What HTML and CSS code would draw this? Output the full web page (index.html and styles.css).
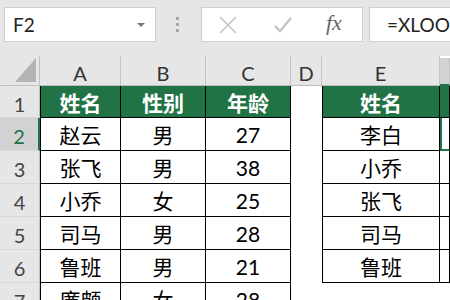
FILE: index.html
```html
<!DOCTYPE html>
<html lang="zh-CN">
<head>
    <meta charset="UTF-8">
    <title>XLOOKUP</title>
    <link rel="stylesheet" href="styles.css">
</head>
<body>
    <div class="toolbar">
        <div class="namebox"><span>F2</span><span class="arrow"></span></div>
        <div class="grip"><i></i><i></i><i></i></div>
        <div class="fxbtns">
            <svg class="ico" width="20" height="20" viewBox="0 0 20 20"><path d="M2 2 L18 18 M18 2 L2 18" stroke="#c4c4c4" stroke-width="1.6" fill="none"/></svg>
            <svg class="ico ok" width="20" height="20" viewBox="0 0 20 20"><path d="M2 11 L7 16 L18 3" stroke="#c4c4c4" stroke-width="2.4" fill="none"/></svg>
            <span class="fx">fx</span>
        </div>
        <div class="formula">=XLOOKUP(E2,A2:A7,B2:B7)</div>
    </div>

    <div class="sheet">
        <div class="corner"><span></span></div>
        <div class="colhead">A</div>
        <div class="colhead">B</div>
        <div class="colhead">C</div>
        <div class="colhead">D</div>
        <div class="colhead">E</div>
        <div class="colhead sel"></div>

        <div class="rowhead">1</div>
        <div class="c l head">姓名</div>
        <div class="c head">性别</div>
        <div class="c head">年龄</div>
        <div class="blank"></div>
        <div class="c l head">姓名</div>
        <div class="c head"></div>

        <div class="rowhead sel">2</div>
        <div class="c l">赵云</div>
        <div class="c">男</div>
        <div class="c">27</div>
        <div class="blank"></div>
        <div class="c l">李白</div>
        <div class="c active"></div>

        <div class="rowhead">3</div>
        <div class="c l">张飞</div>
        <div class="c">男</div>
        <div class="c">38</div>
        <div class="blank"></div>
        <div class="c l">小乔</div>
        <div class="c"></div>

        <div class="rowhead">4</div>
        <div class="c l">小乔</div>
        <div class="c">女</div>
        <div class="c">25</div>
        <div class="blank"></div>
        <div class="c l">张飞</div>
        <div class="c"></div>

        <div class="rowhead">5</div>
        <div class="c l">司马</div>
        <div class="c">男</div>
        <div class="c">28</div>
        <div class="blank"></div>
        <div class="c l">司马</div>
        <div class="c"></div>

        <div class="rowhead">6</div>
        <div class="c l">鲁班</div>
        <div class="c">男</div>
        <div class="c">21</div>
        <div class="blank"></div>
        <div class="c l">鲁班</div>
        <div class="c"></div>

        <div class="rowhead">7</div>
        <div class="c l">廉颇</div>
        <div class="c">女</div>
        <div class="c">28</div>
        <div class="blank"></div>
        <div class="blank"></div>
        <div class="blank"></div>
    </div>
</body>
</html>
```

FILE: styles.css
```css
body {
    margin: 0;
    width: 450px;
    height: 300px;
    overflow: hidden;
    background: #e6e6e6;
    font-family: Lato, "Noto Sans CJK SC", sans-serif;
    color: #000;
}
.toolbar {
    display: flex;
    align-items: flex-start;
    height: 56px;
    padding: 7px 0 0 4px;
    box-sizing: border-box;
}
.namebox {
    width: 152px;
    height: 35px;
    box-sizing: border-box;
    background: #fff;
    border: 1px solid #cfcfcf;
    display: flex;
    align-items: center;
    justify-content: space-between;
    padding: 0 10px 0 8px;
    font-size: 19px;
    color: #222;
}
.arrow {
    width: 0;
    height: 0;
    border-left: 4px solid transparent;
    border-right: 4px solid transparent;
    border-top: 4px solid #777;
}
.grip {
    margin: 0 22px 0 20px;
    height: 35px;
    display: flex;
    flex-direction: column;
    justify-content: center;
    gap: 3px;
}
.grip i {
    width: 3px;
    height: 3px;
    background: #a8a8a8;
}
.fxbtns {
    width: 162px;
    height: 35px;
    box-sizing: border-box;
    background: #fff;
    border: 1px solid #cfcfcf;
    display: flex;
    align-items: center;
    padding-left: 16px;
}
.ico {
    margin-right: 35px;
}
.ico.ok {
    margin-right: 33px;
}
.fx {
    font-family: "Liberation Serif", serif;
    font-style: italic;
    font-size: 22px;
    color: #666;
    margin-top: -3px;
}
.formula {
    flex: 1;
    margin-left: 6px;
    height: 35px;
    box-sizing: border-box;
    background: #fff;
    border: 1px solid #cfcfcf;
    border-right: none;
    padding-left: 17px;
    font-size: 19px;
    line-height: 33px;
    color: #222;
    white-space: nowrap;
    overflow: hidden;
}
.sheet {
    display: grid;
    grid-template-columns: 40px 81px 85px 85px 31px 118px 1fr;
    grid-template-rows: 30px 32px repeat(6, 33px);
    background: #fff;
}
.sheet > div {
    box-sizing: border-box;
    display: flex;
    align-items: center;
    justify-content: center;
}
.corner {
    background: #e6e6e6;
    border-right: 1px solid #c0c0c0;
    border-bottom: 1px solid #c0c0c0;
    justify-content: flex-end !important;
    align-items: flex-end !important;
}
.corner span {
    width: 21px;
    height: 24px;
    margin: 0 3px 3px 0;
    background: #b4b4b4;
    clip-path: polygon(100% 0, 100% 100%, 0 100%);
}
.colhead {
    background: #e6e6e6;
    border-right: 1px solid #c4c4c4;
    border-bottom: 1px solid #bdbdbd;
    font-size: 20px;
    color: #333;
    padding-top: 4px;
}
.colhead.sel {
    background: #d2d2d2;
    margin-top: 2px;
    border-bottom: 2px solid #217346;
}
.rowhead {
    background: #e6e6e6;
    border-right: 1px solid #c0c0c0;
    border-bottom: 1px solid #d6d6d6;
    font-size: 20px;
    color: #444;
    padding-top: 4px;
}
.rowhead.sel {
    background: #d2d2d2;
    color: #217346;
    border-right: 2px solid #217346;
}
.c {
    border-right: 1px solid #000;
    border-bottom: 1px solid #000;
    font-size: 21px;
}
.c.l {
    border-left: 1px solid #000;
}
.c.head {
    background: #217346;
    color: #fff;
    font-weight: bold;
}
.c.active {
    border-left: 2px solid #217346;
    border-bottom: 2px solid #217346;
}
.blank {
    background: #fff;
}
```
